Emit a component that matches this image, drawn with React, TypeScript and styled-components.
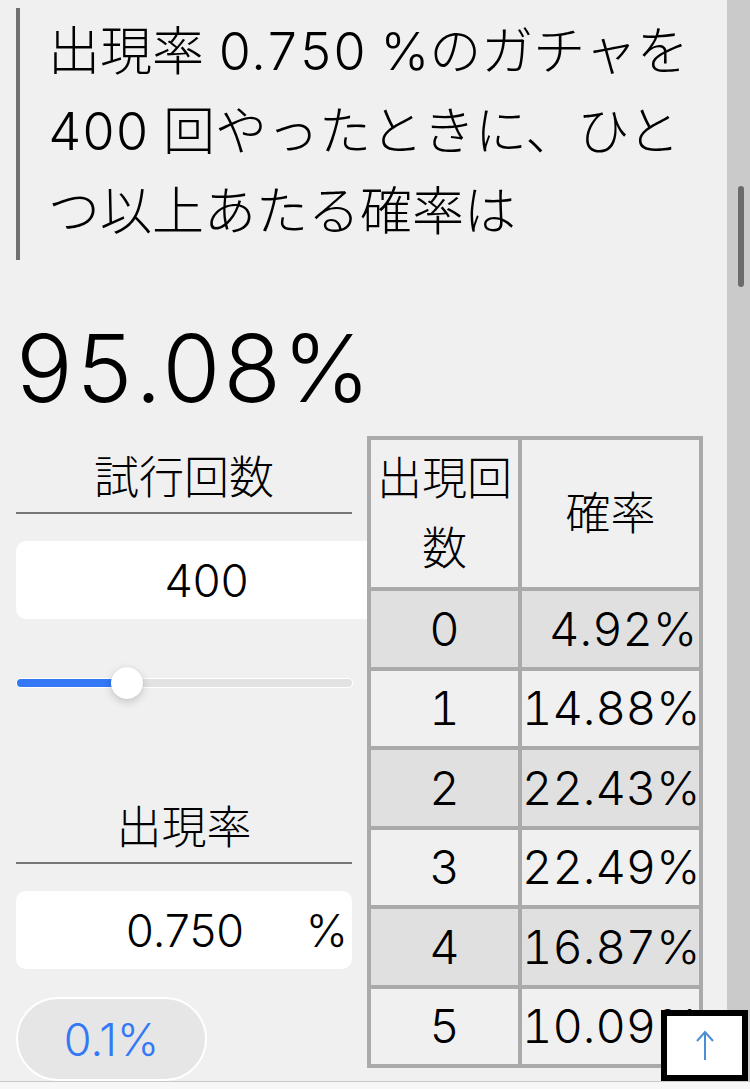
import React from "react";
import styled, { createGlobalStyle } from "styled-components";

const GlobalStyle = createGlobalStyle`
  html, body {
    margin: 0;
    padding: 0;
    height: 1089px;
    overflow: hidden;
    background: #f0f0f0;
  }
  body {
    font-family: Inter, "Noto Sans CJK JP", sans-serif;
    font-weight: 300;
    font-variant-numeric: tabular-nums;
    color: #000;
  }
  #root { height: 100%; }
  * { box-sizing: border-box; }
`;

const Screen = styled.div`
  display: flex;
  height: 1089px;
  overflow: hidden;
`;

const Main = styled.main`
  flex: 1;
  min-width: 0;
  padding: 8px 24px 0 16px;
`;

const Question = styled.blockquote`
  margin: 0 -8px 0 0;
  padding: 4px 0 8px 28px;
  border-left: 4px solid #707070;
  font-size: 52px;
  line-height: 80px;
`;

const Result = styled.div`
  margin: 46px 0 5px -2px;
  font-size: 94px;
  line-height: 125px;
`;

const Columns = styled.div`
  display: flex;
  align-items: flex-start;
  gap: 15px;
`;

const Controls = styled.div`
  flex: none;
  width: 336px;
  display: flex;
  flex-direction: column;
`;

const FieldLabel = styled.div<{ $gap: number }>`
  margin-top: ${(p) => p.$gap}px;
  font-size: 45px;
  line-height: 68px;
  text-align: center;
  border-bottom: 2px solid #777;
`;

const NumberBox = styled.div<{ $wide?: boolean }>`
  margin-top: 27px;
  width: ${(p) => (p.$wide ? "381px" : "336px")};
  height: 78px;
  background: #fff;
  border-radius: 10px;
  display: flex;
  align-items: center;
  justify-content: ${(p) => (p.$wide ? "center" : "flex-start")};
  font-size: 45px;
  font-variant-numeric: normal;
`;

const Value = styled.span`
  flex: 1;
  text-align: right;
`;

const Unit = styled.span`
  width: 108px;
  padding-right: 4px;
  text-align: right;
`;

const Slider = styled.div`
  position: relative;
  margin-top: 48px;
  height: 32px;
  padding-top: 12px;
`;

const Track = styled.div`
  margin-left: 1px;
  width: 335px;
  height: 8px;
  border-radius: 4px;
  background: #e2e2e2;
  box-shadow: 0 0 0 1px #fff;
  overflow: hidden;
`;

const Fill = styled.div`
  height: 100%;
  background: #3478f6;
`;

const Thumb = styled.div`
  position: absolute;
  top: 0;
  width: 32px;
  height: 32px;
  margin-left: -16px;
  border-radius: 50%;
  background: #fff;
  box-shadow: 0 3px 8px rgba(0, 0, 0, 0.18), 0 0 1px rgba(0, 0, 0, 0.15);
`;

const PresetButton = styled.button`
  margin-top: 28px;
  width: 191px;
  height: 84px;
  border-radius: 42px;
  border: 2px solid #fff;
  background: #e6e6e6;
  color: #3478f6;
  font-family: inherit;
  font-weight: 300;
  font-size: 45px;
  padding: 0;
`;

const ProbTable = styled.table`
  flex: none;
  position: relative;
  z-index: 1;
  width: 336px;
  table-layout: fixed;
  border-collapse: separate;
  border-spacing: 0;
  background: #f0f0f0;
`;

const HeadCell = styled.th`
  font-weight: 300;
  font-size: 45px;
  line-height: 70px;
  height: 155px;
  padding: 0;
  text-align: center;
  vertical-align: middle;
  border-top: 4px solid #aaa;
  border-right: 4px solid #aaa;
  border-bottom: 4px solid #aaa;
  &:first-child { border-left: 4px solid #aaa; }
`;

const Row = styled.tr<{ $shade: boolean }>`
  background: ${(p) => (p.$shade ? "#e0e0e0" : "#f0f0f0")};
`;

const Cell = styled.td<{ $align: "center" | "right" }>`
  height: 79.5px;
  font-size: 47px;
  line-height: 70px;
  padding: 0 ${(p) => (p.$align === "right" ? "2px" : "0")} 0 0;
  text-align: ${(p) => p.$align};
  border-right: 4px solid #aaa;
  border-bottom: 4px solid #aaa;
  white-space: nowrap;
  overflow: hidden;
  &:first-child { border-left: 4px solid #aaa; }
`;

const ScrollTrack = styled.div`
  flex: none;
  width: 23px;
  background: #cacaca;
`;

const ScrollThumb = styled.div`
  margin: 186px 0 0 11px;
  width: 6px;
  height: 101px;
  border-radius: 3px;
  background: #6b6b6b;
`;

const BottomBar = styled.div`
  position: fixed;
  left: 0;
  right: 0;
  bottom: 0;
  height: 8px;
  border-top: 1px solid #c8c8c8;
  background: #f7f7f7;
  z-index: 2;
`;

const TopButton = styled.button`
  position: fixed;
  right: 2px;
  bottom: 8px;
  width: 87px;
  height: 71px;
  border: 6px solid #000;
  background: #fff;
  padding: 0;
  display: flex;
  align-items: center;
  justify-content: center;
  z-index: 3;
`;

const rows = [
  ["0", "4.92%"],
  ["1", "14.88%"],
  ["2", "22.43%"],
  ["3", "22.49%"],
  ["4", "16.87%"],
  ["5", "10.09%"],
];

export default function App() {
  const ratio = 0.31;
  const thumbX = 17 + 16 + ratio * (335 - 32);
  return (
    <>
      <GlobalStyle />
      <Screen>
        <Main>
          <Question>出現率 0.750 %のガチャを400 回やったときに、ひとつ以上あたる確率は</Question>
          <Result>95.08%</Result>
          <Columns>
            <Controls>
              <FieldLabel $gap={8}>試行回数</FieldLabel>
              <NumberBox $wide>400</NumberBox>
              <Slider>
                <Track>
                  <Fill style={{ width: `${thumbX - 17}px` }} />
                </Track>
                <Thumb style={{ left: `${thumbX - 16}px` }} />
              </Slider>
              <FieldLabel $gap={95}>出現率</FieldLabel>
              <NumberBox>
                <Value>0.750</Value>
                <Unit>%</Unit>
              </NumberBox>
              <PresetButton>0.1%</PresetButton>
            </Controls>
            <ProbTable>
              <colgroup>
                <col style={{ width: 155 }} />
                <col style={{ width: 181 }} />
              </colgroup>
              <thead>
                <tr>
                  <HeadCell>出現回数</HeadCell>
                  <HeadCell>確率</HeadCell>
                </tr>
              </thead>
              <tbody>
                {rows.map(([n, p], i) => (
                  <Row key={n} $shade={i % 2 === 0}>
                    <Cell $align="center">{n}</Cell>
                    <Cell $align="right">{p}</Cell>
                  </Row>
                ))}
              </tbody>
            </ProbTable>
          </Columns>
        </Main>
        <ScrollTrack>
          <ScrollThumb />
        </ScrollTrack>
      </Screen>
      <TopButton aria-label="ページの先頭へ">
        <svg width="20" height="32" viewBox="0 0 20 32" fill="none">
          <path d="M10 2 V30 M2 11 L10 2 L18 11" stroke="#4a8fd4" strokeWidth="2" />
        </svg>
      </TopButton>
      <BottomBar />
    </>
  );
}
